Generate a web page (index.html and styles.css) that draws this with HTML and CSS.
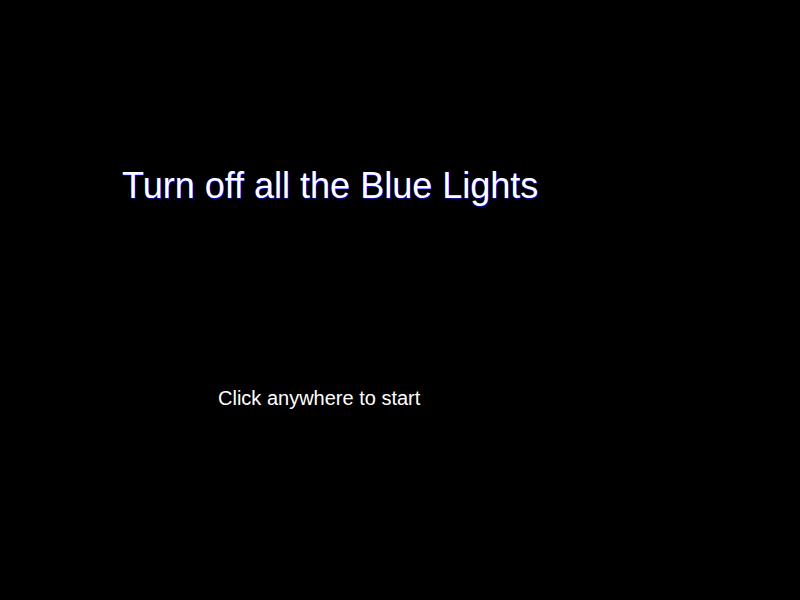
FILE: index.html
```html
<!DOCTYPE html>
<html>
<head>
<meta charset="utf-8">
<link rel="stylesheet" href="styles.css">
</head>
<body>
<main class="screen">
  <h1 class="title">Turn off all the Blue Lights</h1>
  <p class="prompt">Click anywhere to start</p>
</main>
</body>
</html>
```
FILE: styles.css
```css
html, body {
  margin: 0;
  padding: 0;
  background: #000;
  width: 800px;
  height: 600px;
  overflow: hidden;
}
.screen {
  display: flex;
  flex-direction: column;
  align-items: flex-start;
  padding: 166px 0 0 122px;
  font-family: "Liberation Sans", Arial, sans-serif;
  color: #fff;
}
.title {
  margin: 0;
  font-size: 36px;
  line-height: 40px;
  font-weight: normal;
  text-shadow: 1px 1px 0 #0000ff;
}
.prompt {
  margin: 180px 0 0 96px;
  font-size: 20px;
  line-height: 24px;
}
```
